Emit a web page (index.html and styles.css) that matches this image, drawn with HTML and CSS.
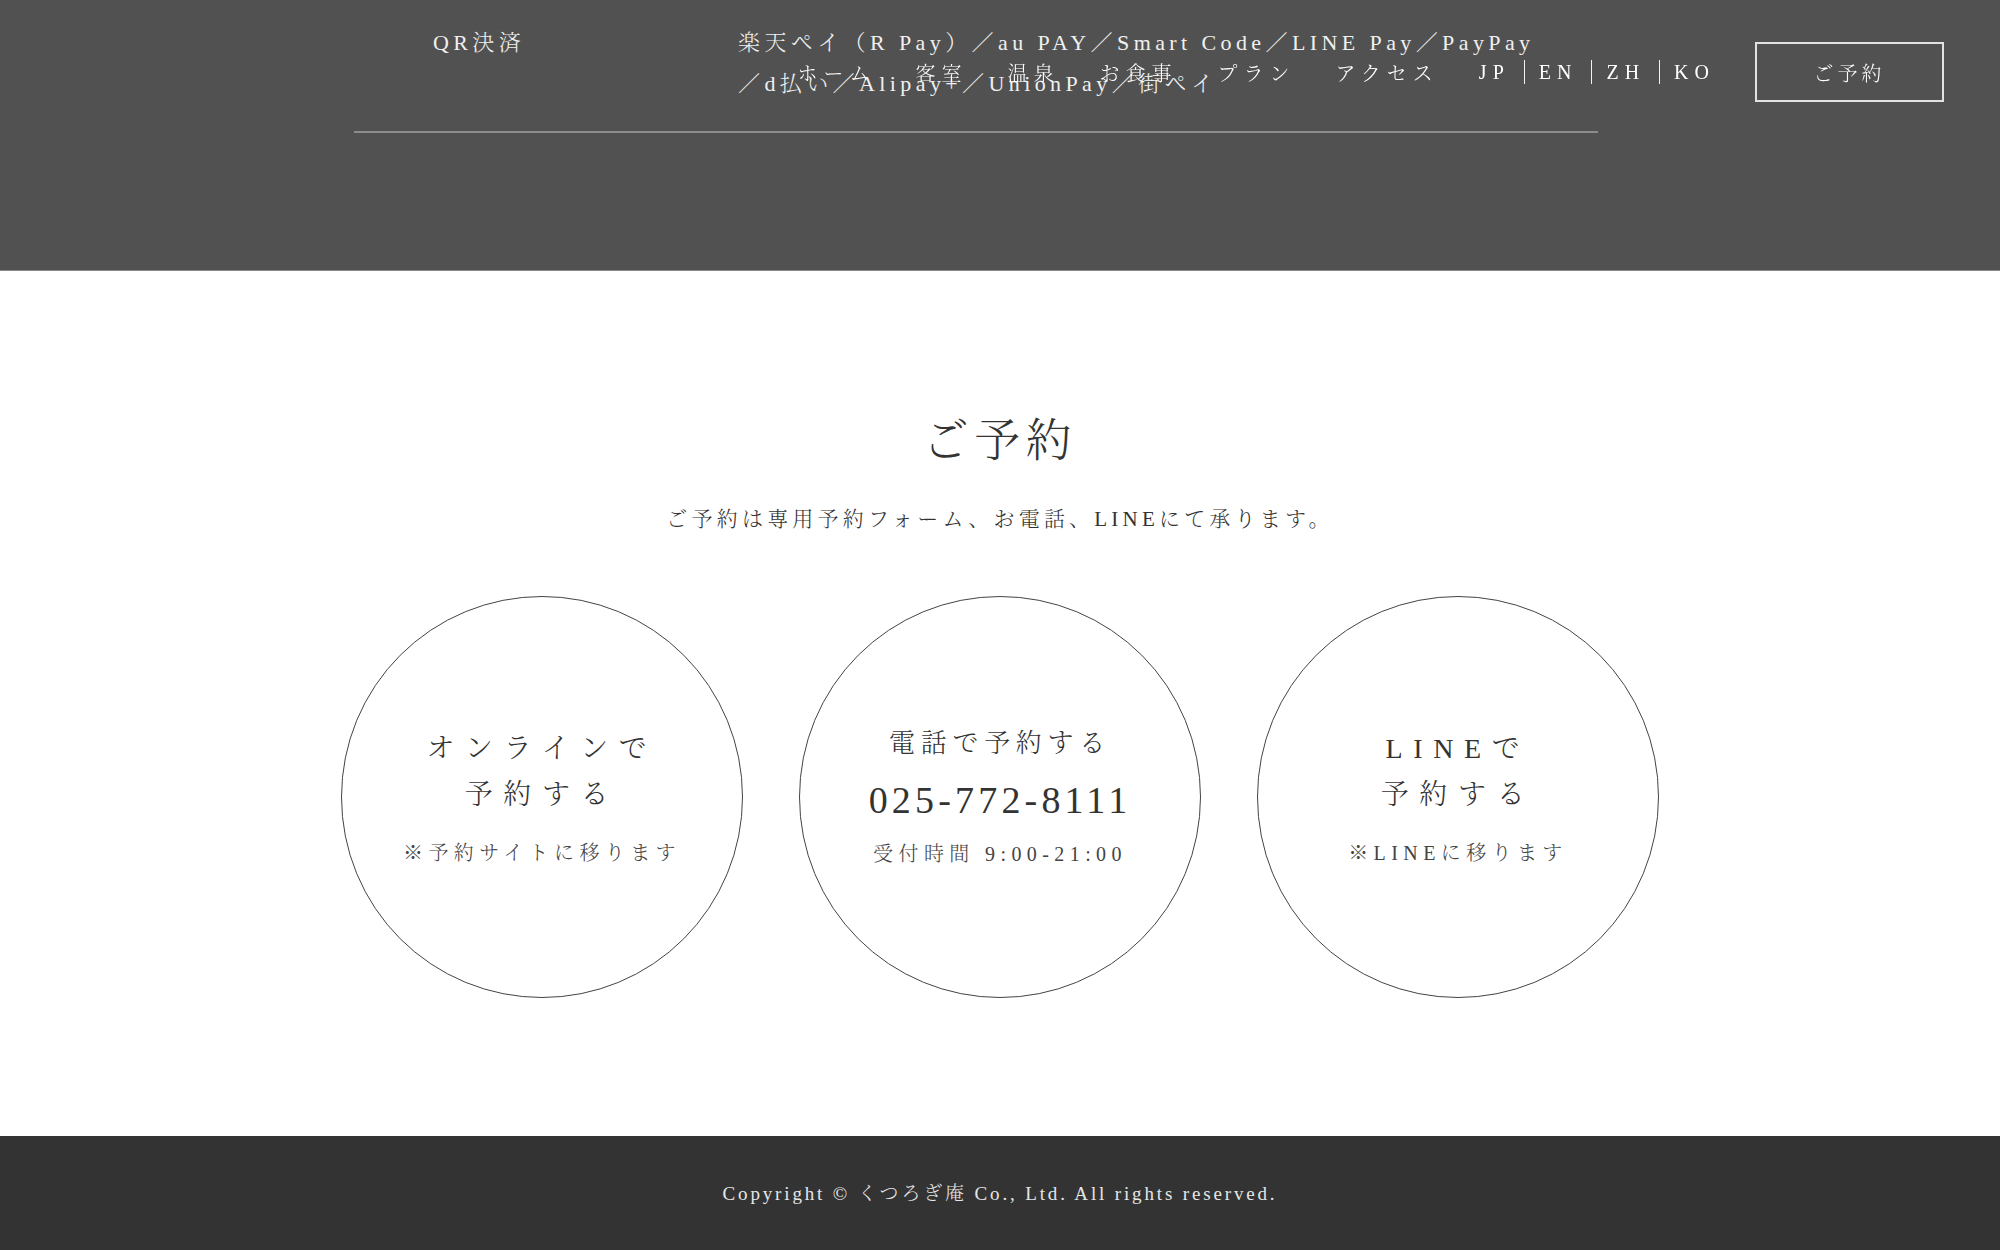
FILE: index.html
```html
<!DOCTYPE html>
<html lang="ja">
<head>
    <meta charset="UTF-8">
    <meta name="viewport" content="width=device-width, initial-scale=1.0">
    <title>ご予約 | くつろぎ庵</title>
    <link rel="stylesheet" href="styles.css">
</head>
<body>
    <header class="site-header">
        <nav class="global-nav">
            <ul class="nav-list">
                <li><a href="#">ホーム</a></li>
                <li><a href="#">客室</a></li>
                <li><a href="#">温泉</a></li>
                <li><a href="#">お食事</a></li>
                <li><a href="#">プラン</a></li>
                <li><a href="#">アクセス</a></li>
            </ul>
            <ul class="lang-list">
                <li><a href="#">JP</a></li>
                <li><a href="#">EN</a></li>
                <li><a href="#">ZH</a></li>
                <li><a href="#">KO</a></li>
            </ul>
            <a href="#reserve" class="header-btn">ご予約</a>
        </nav>
    </header>

    <main>
        <section class="payment">
            <dl class="payment-row">
                <dt>QR決済</dt>
                <dd>楽天ペイ（R Pay）／au PAY／Smart Code／LINE Pay／PayPay<br>／d払い／Alipay+／UnionPay／街ペイ</dd>
            </dl>
        </section>

        <section class="reserve" id="reserve">
            <h2 class="reserve-title">ご予約</h2>
            <p class="reserve-lead">ご予約は専用予約フォーム、お電話、LINEにて承ります。</p>
            <div class="reserve-list">
                <a href="#" class="reserve-circle">
                    <span class="circle-title">オンラインで<br>予約する</span>
                    <span class="circle-note">※予約サイトに移ります</span>
                </a>
                <a href="tel:0257728111" class="reserve-circle">
                    <span class="tel-label">電話で予約する</span>
                    <span class="tel-number">025-772-8111</span>
                    <span class="tel-hours">受付時間 9:00-21:00</span>
                </a>
                <a href="#" class="reserve-circle">
                    <span class="circle-title">LINEで<br>予約する</span>
                    <span class="circle-note">※LINEに移ります</span>
                </a>
            </div>
        </section>
    </main>

    <footer class="site-footer">
        <p>Copyright © くつろぎ庵 Co., Ltd. All rights reserved.</p>
    </footer>
</body>
</html>
```

FILE: styles.css
```css
body {
    margin: 0;
    padding: 0;
    font-family: "Liberation Serif", "Noto Serif CJK JP", "Noto Sans CJK JP", serif;
    font-weight: 300;
    color: #333;
    background-color: #fff;
}
a {
    color: inherit;
    text-decoration: none;
}
ul {
    list-style: none;
    margin: 0;
    padding: 0;
}

/* header (fixed over the page) */
.site-header {
    position: fixed;
    top: 0;
    left: 0;
    right: 0;
    z-index: 10;
    color: #fff;
}
.global-nav {
    display: flex;
    justify-content: flex-end;
    align-items: center;
    gap: 40px;
    height: 144px;
    padding-right: 56px;
    font-size: 20px;
    letter-spacing: 0.3em;
}
.nav-list {
    display: flex;
    gap: 40px;
}
.lang-list {
    display: flex;
}
.lang-list li {
    line-height: 24px;
    padding: 0 14px;
}
.lang-list li + li {
    border-left: 1px solid #f2f2f2;
}
.lang-list li:first-child {
    padding-left: 0;
}
.lang-list li:last-child {
    padding-right: 0;
}
.header-btn {
    display: flex;
    justify-content: center;
    align-items: center;
    box-sizing: border-box;
    width: 189px;
    height: 60px;
    border: 2px solid #e2e2e2;
    letter-spacing: 0.2em;
}

/* payment table */
.payment {
    background-color: #515151;
    padding: 22px 0 137px;
    border-bottom: 1px solid #8a8a8a;
    color: #f0f0f0;
}
.payment-row {
    display: grid;
    grid-template-columns: 250px 1fr;
    column-gap: 134px;
    width: 1244px;
    margin: 0 0 0 354px;
    padding-bottom: 27px;
    border-bottom: 2px solid #8c8c8c;
    font-size: 22px;
    line-height: 41px;
    letter-spacing: 0.2em;
}
.payment-row dt {
    text-align: center;
}
.payment-row dd {
    margin: 0;
}

/* reserve */
.reserve {
    padding: 137px 0 138px;
    text-align: center;
}
.reserve-title {
    margin: 0;
    font-size: 46px;
    font-weight: 300;
    line-height: 66px;
    letter-spacing: 0.12em;
}
.reserve-lead {
    margin: 27px 0 0;
    font-size: 21px;
    line-height: 36px;
    letter-spacing: 0.2em;
}
.reserve-list {
    display: flex;
    justify-content: center;
    gap: 56px;
    margin-top: 59px;
}
.reserve-circle {
    display: flex;
    flex-direction: column;
    justify-content: center;
    align-items: center;
    width: 400px;
    height: 400px;
    border: 1px solid #444;
    border-radius: 50%;
    color: #333;
}
.circle-title {
    font-size: 28px;
    line-height: 46px;
    letter-spacing: 0.38em;
}
.circle-note {
    margin-top: 20px;
    font-size: 20px;
    line-height: 30px;
    letter-spacing: 0.27em;
    color: #444;
}
.tel-label {
    font-size: 26px;
    line-height: 36px;
    letter-spacing: 0.22em;
}
.tel-number {
    margin-top: 13px;
    font-size: 38px;
    line-height: 50px;
    letter-spacing: 0.11em;
}
.tel-hours {
    margin-top: 14px;
    font-size: 20px;
    line-height: 30px;
    letter-spacing: 0.27em;
    color: #444;
}

/* footer */
.site-footer {
    background-color: #333;
    padding: 40px 0;
    color: #e6e6e6;
    text-align: center;
}
.site-footer p {
    margin: 0;
    font-size: 19px;
    line-height: 36px;
    letter-spacing: 0.15em;
}
```
